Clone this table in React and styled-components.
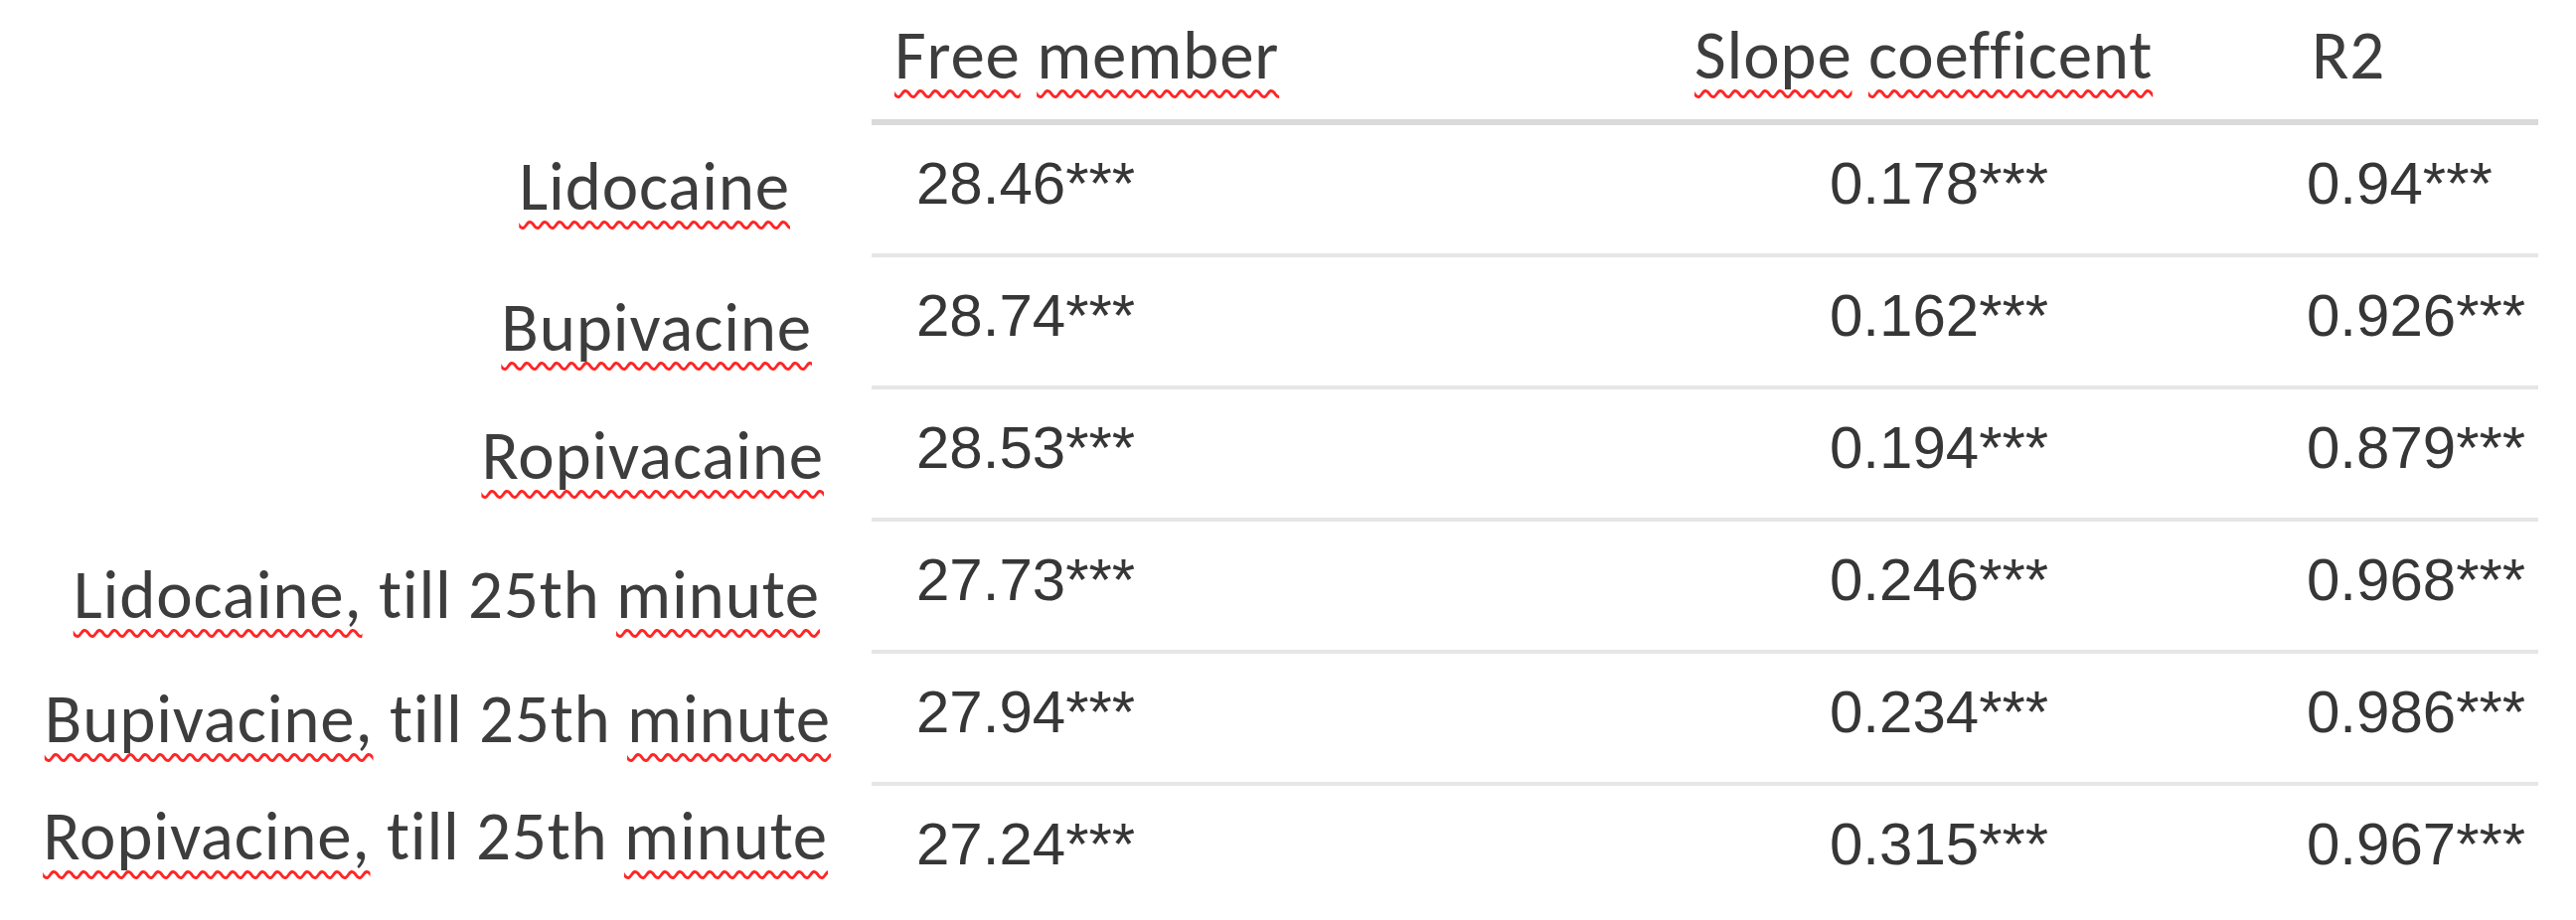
import React from 'react'
import styled, { createGlobalStyle } from 'styled-components'

const GlobalStyle = createGlobalStyle`
  html, body {
    margin: 0;
    padding: 0;
    background: #ffffff;
  }
`

const COLUMNS = '877px 813px 616px 248px'

const Table = styled.div`
  display: flex;
  flex-direction: column;
  width: 2554px;
  color: #3d3d3d;
`

const HeaderRow = styled.div`
  display: grid;
  grid-template-columns: ${COLUMNS};
  height: 126px;
`

const Row = styled.div`
  display: grid;
  grid-template-columns: ${COLUMNS};
  height: ${props => props.last ? '135px' : '133px'};
`

const HeadCell = styled.div`
  box-sizing: border-box;
  border-bottom: 6px solid #dadada;
  padding: 21px 0 0 ${props => props.pad}px;
  font-family: Carlito, Lato, 'Open Sans', sans-serif;
  font-size: 69px;
  line-height: 1;
  letter-spacing: 0.8px;
  white-space: nowrap;
`

const Blank = styled.div``

const Label = styled.div`
  box-sizing: border-box;
  text-align: right;
  padding: ${props => props.top}px ${props => props.right}px 0 0;
  font-family: Carlito, Lato, 'Open Sans', sans-serif;
  font-size: 69px;
  line-height: 1;
  letter-spacing: 0.8px;
  white-space: nowrap;
`

const Value = styled.div`
  box-sizing: border-box;
  border-bottom: ${props => props.last ? 'none' : '4px solid #e6e6e6'};
  padding: 29px 0 0 ${props => props.pad}px;
  font-family: 'Liberation Sans', Arial, sans-serif;
  font-size: 60px;
  line-height: 1;
  color: #363636;
  white-space: nowrap;
`

const Typo = styled.span`
  text-decoration-line: underline;
  text-decoration-style: wavy;
  text-decoration-color: #ff2626;
  text-decoration-thickness: 3px;
  text-underline-offset: 11px;
  text-decoration-skip-ink: none;
`

const headers = [
  { pad: 23, words: [['Free', true], [' '], ['member', true]] },
  { pad: 15, words: [['Slope', true], [' '], ['coefficent', true]] },
  { pad: 20, words: [['R2']] }
]

const valuePads = [45, 151, 15]

const rows = [
  { top: 27, right: 82, words: [['Lidocaine', true]], values: ['28.46***', '0.178***', '0.94***'] },
  { top: 36, right: 60, words: [['Bupivacine', true]], values: ['28.74***', '0.162***', '0.926***'] },
  { top: 32, right: 48, words: [['Ropivacaine', true]], values: ['28.53***', '0.194***', '0.879***'] },
  { top: 39, right: 52, words: [['Lidocaine,', true], [' till 25th '], ['minute', true]], values: ['27.73***', '0.246***', '0.968***'] },
  { top: 31, right: 41, words: [['Bupivacine,', true], [' till 25th '], ['minute', true]], values: ['27.94***', '0.234***', '0.986***'] },
  { top: 16, right: 44, words: [['Ropivacine,', true], [' till 25th '], ['minute', true]], values: ['27.24***', '0.315***', '0.967***'] }
]

function renderWords (words) {
  return words.map(([text, typo], i) => typo ? <Typo key={i}>{text}</Typo> : <span key={i}>{text}</span>)
}

export default function App () {
  return (
    <>
      <GlobalStyle />
      <Table>
        <HeaderRow>
          <Blank />
          {headers.map((h, i) => (
            <HeadCell key={i} pad={h.pad}>{renderWords(h.words)}</HeadCell>
          ))}
        </HeaderRow>
        {rows.map((r, ri) => {
          const last = ri === rows.length - 1
          return (
            <Row key={ri} last={last}>
              <Label top={r.top} right={r.right}>{renderWords(r.words)}</Label>
              {r.values.map((v, vi) => (
                <Value key={vi} pad={valuePads[vi]} last={last}>{v}</Value>
              ))}
            </Row>
          )
        })}
      </Table>
    </>
  )
}
